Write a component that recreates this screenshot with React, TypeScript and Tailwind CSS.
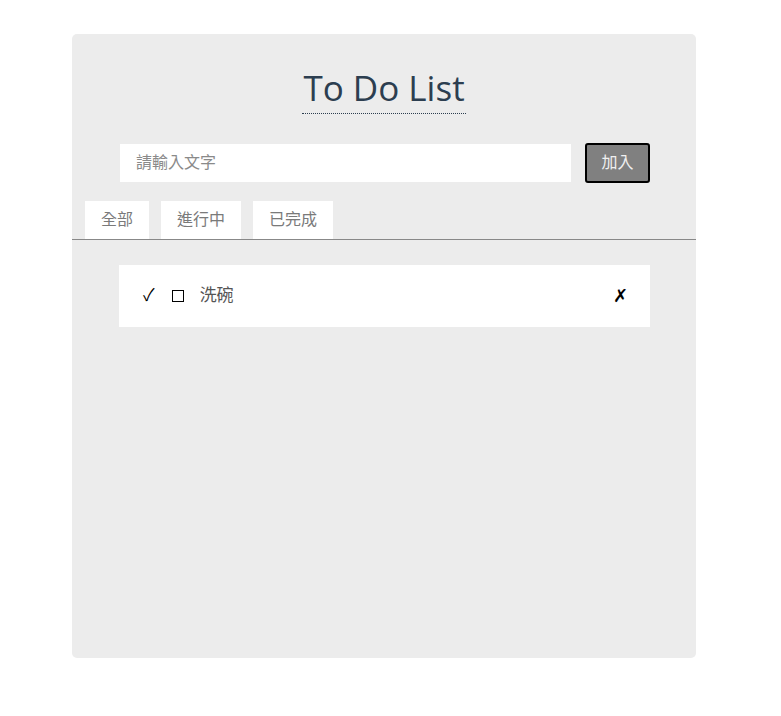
import { useState } from "react";

type Todo = { id: number; text: string; done: boolean };

const tabs = ["全部", "進行中", "已完成"];

export default function App() {
  const [todos] = useState<Todo[]>([{ id: 1, text: "洗碗", done: false }]);
  const [tab, setTab] = useState(0);

  return (
    <div
      className="min-h-[716px] bg-white pt-[34px]"
      style={{ fontFamily: '"Liberation Sans", "Noto Sans CJK TC", sans-serif' }}
    >
      <div className="ml-[72px] h-[624px] w-[624px] rounded-[5px] bg-[#ececec]">
        <div className="flex justify-center pt-[32px]">
          <h1
            className="border-b border-dotted border-[#2c3e50] px-[1px] pb-[4px] text-[35px] leading-[43px] font-normal text-[#2c3e50]"
            style={{ fontFamily: '"Open Sans", "Liberation Sans", sans-serif', fontWeight: 400 }}
          >
            To Do List
          </h1>
        </div>

        <div className="mt-[29px] flex items-center pl-[48px]">
          <input
            className="h-[38px] w-[451px] bg-white px-[16px] text-[16px] text-[#555] outline-none placeholder:text-[#8a8a8a]"
            placeholder="請輸入文字"
          />
          <button className="ml-[14px] h-[40px] w-[65px] rounded-[3px] border-2 border-black bg-[#808080] text-[16px] text-[#f0f0f0]">
            加入
          </button>
        </div>

        <div className="mt-[18px] flex gap-[12px] border-b border-[#888] pl-[13px]">
          {tabs.map((t, i) => (
            <button
              key={t}
              onClick={() => setTab(i)}
              className="h-[38px] bg-white px-[16px] text-[16px] text-[#7a7a7a]"
            >
              {t}
            </button>
          ))}
        </div>

        <ul className="mt-[25px] pl-[47px] pr-[46px]">
          {todos
            .filter((t) => (tab === 1 ? !t.done : tab === 2 ? t.done : true))
            .map((t) => (
              <li key={t.id} className="flex h-[62px] items-center bg-white pl-[24px] pr-[22px]">
                <span className="text-[17px] text-black">✓</span>
                <span className="ml-[17px] inline-block h-[12px] w-[12px] border border-black" />
                <span className="ml-[16px] text-[17px] text-[#555]">{t.text}</span>
                <span className="ml-auto text-[18px] text-black">✗</span>
              </li>
            ))}
        </ul>
      </div>
    </div>
  );
}
